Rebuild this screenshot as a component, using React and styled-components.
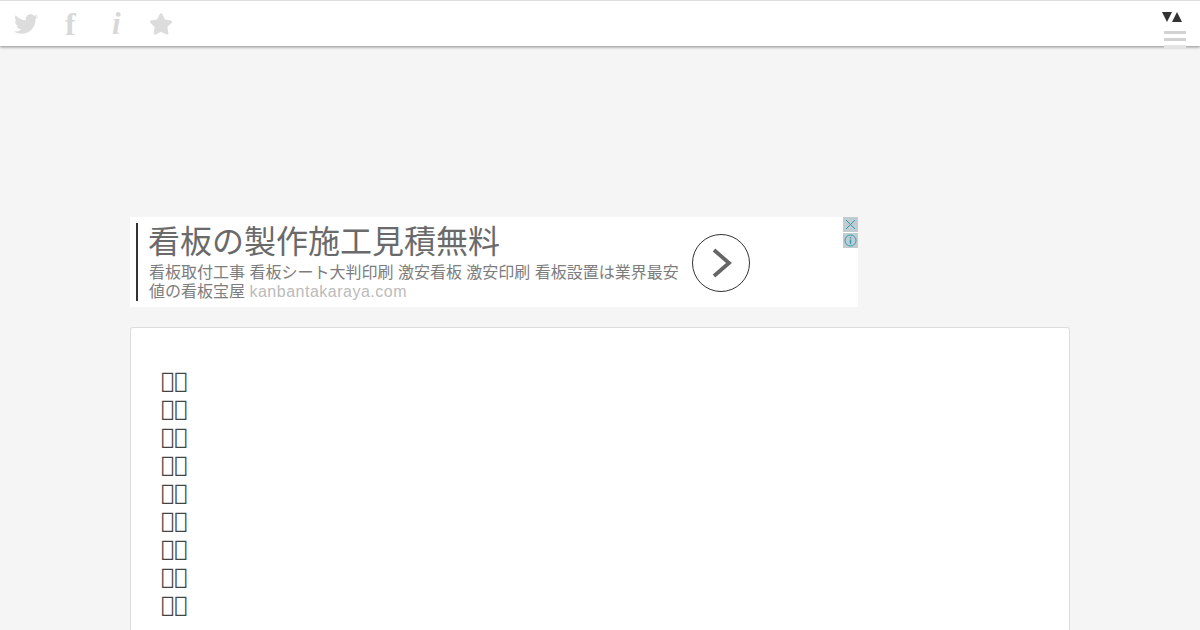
import React from 'react';
import styled, { createGlobalStyle } from 'styled-components';
import { FaTwitter, FaStar } from 'react-icons/fa';

const GlobalStyle = createGlobalStyle`
  html, body {
    margin: 0;
    height: 630px;
    overflow: hidden;
    background: #f5f5f5;
    font-family: "DejaVu Sans", sans-serif;
  }
`;

const Header = styled.header`
  height: 45px;
  box-sizing: content-box;
  border-top: 1px solid #ddd;
  background: #fff;
  box-shadow: 0 1px 3px rgba(0, 0, 0, 0.45);
  display: flex;
  justify-content: space-between;
  padding: 0 14px 0 14px;
`;

const SocialList = styled.nav`
  display: flex;
  align-items: center;
  color: #dcdcdc;
`;

const SocialIcon = styled.span`
  width: 45px;
  height: 24px;
  display: flex;
  align-items: center;
  justify-content: flex-start;
  padding-left: ${(p) => p.$inset || 0}px;
  box-sizing: border-box;
  font-size: ${(p) => p.$size || 22}px;
`;

const LetterGlyph = styled.span`
  font-family: "Liberation Serif", serif;
  font-style: ${(p) => (p.$italic ? 'italic' : 'normal')};
  font-weight: 700;
  font-size: ${(p) => p.$size}px;
  line-height: 24px;
  color: #d8d8d8;
`;

const MenuColumn = styled.div`
  width: 26px;
  display: flex;
  flex-direction: column;
  align-items: flex-end;
`;

const Arrows = styled.div`
  margin: 11px 4px 0 0;
  height: 10px;
  display: flex;
  align-items: center;
`;

const Arrow = styled.span`
  width: 0;
  height: 0;
  border-left: 5.5px solid transparent;
  border-right: 5.5px solid transparent;
  border-top: ${(p) => (p.$down ? '10px solid #333' : 'none')};
  border-bottom: ${(p) => (p.$down ? 'none' : '10px solid #333')};
`;

const Burger = styled.div`
  margin-top: 9px;
  display: flex;
  flex-direction: column;
  gap: 4px;
  position: relative;
  z-index: 2;
`;

const BurgerLine = styled.span`
  display: block;
  width: 22px;
  height: 3px;
  background: ${(p) => (p.$faint ? '#e4e4e4' : '#d2d2d2')};
`;

const Main = styled.main`
  width: 940px;
  margin: 171px auto 0;
`;

const AdBanner = styled.aside`
  position: relative;
  width: 728px;
  height: 90px;
  box-sizing: border-box;
  background: #fff;
  padding: 6px 0 6px 6px;
  display: flex;
  font-family: "Liberation Sans", "Noto Sans CJK JP", sans-serif;
`;

const AdBody = styled.div`
  width: 548px;
  border-left: 2px solid #333;
  padding-left: 11px;
  display: flex;
  flex-direction: column;
  box-sizing: border-box;
  margin-right: 8px;
`;

const AdTitle = styled.div`
  margin: 1px 0 0 -1px;
  font-size: 32px;
  line-height: 36px;
  color: #6a6a6a;
  white-space: nowrap;
`;

const AdText = styled.div`
  margin-top: 3px;
  width: 535px;
  font-size: 16px;
  line-height: 19px;
  color: #7d7d7d;
`;

const AdUrl = styled.span`
  letter-spacing: 0.5px;
  color: #bbb;
`;

const AdArrow = styled.div`
  width: 58px;
  height: 58px;
  margin: 11px 0 0 0;
  box-sizing: border-box;
  border: 1px solid #333;
  border-radius: 50%;
  display: flex;
  align-items: center;
  justify-content: center;
`;

const AdBadges = styled.div`
  position: absolute;
  top: 0;
  right: 0;
  width: 15px;
  display: flex;
  flex-direction: column;
  gap: 1px;
`;

const AdBadge = styled.span`
  width: 15px;
  height: 15px;
  background: #c0cccf;
  display: flex;
  align-items: center;
  justify-content: center;
`;

const Card = styled.section`
  margin-top: 20px;
  height: 303px;
  box-sizing: border-box;
  background: #fff;
  border: 1px solid #ddd;
  border-bottom: none;
  border-radius: 3px 3px 0 0;
  padding: 39px 30px 0;
`;

const Line = styled.div`
  font-family: "DejaVu Sans", sans-serif;
  font-size: 22px;
  line-height: 28px;
  color: #444;
`;

const lines = Array.from({ length: 9 }, () => '\uE000\uE000');

export default function App() {
  return (
    <>
      <GlobalStyle />
      <Header>
        <SocialList>
          <SocialIcon $size={24}><FaTwitter /></SocialIcon>
          <SocialIcon $inset={6}><LetterGlyph $size={32}>f</LetterGlyph></SocialIcon>
          <SocialIcon $inset={8}><LetterGlyph $size={31} $italic>i</LetterGlyph></SocialIcon>
          <SocialIcon $size={24}><FaStar /></SocialIcon>
        </SocialList>
        <MenuColumn>
          <Arrows>
            <Arrow $down />
            <Arrow />
          </Arrows>
          <Burger>
            <BurgerLine />
            <BurgerLine />
            <BurgerLine $faint />
          </Burger>
        </MenuColumn>
      </Header>
      <Main>
        <AdBanner>
          <AdBody>
            <AdTitle>看板の製作施工見積無料</AdTitle>
            <AdText>
              看板取付工事 看板シート大判印刷 激安看板 激安印刷 看板設置は業界最安値の看板宝屋 <AdUrl>kanbantakaraya.com</AdUrl>
            </AdText>
          </AdBody>
          <AdArrow>
            <svg width="26" height="34" viewBox="0 0 26 34">
              <path d="M6 4 L21 17 L6 30" fill="none" stroke="#666" strokeWidth="3.8" />
            </svg>
          </AdArrow>
          <AdBadges>
            <AdBadge>
              <svg width="11" height="11" viewBox="0 0 11 11">
                <path d="M1 1 L10 10 M10 1 L1 10" stroke="#2d9db5" strokeWidth="1" />
              </svg>
            </AdBadge>
            <AdBadge>
              <svg width="13" height="13" viewBox="0 0 13 13">
                <circle cx="6.5" cy="6.5" r="5.5" fill="none" stroke="#2d9db5" strokeWidth="1" />
                <path d="M6.5 3 V4.4 M6.5 5.6 V10" stroke="#2d9db5" strokeWidth="1.4" />
              </svg>
            </AdBadge>
          </AdBadges>
        </AdBanner>
        <Card>
          {lines.map((text, i) => (
            <Line key={i}>{text}</Line>
          ))}
        </Card>
      </Main>
    </>
  );
}
